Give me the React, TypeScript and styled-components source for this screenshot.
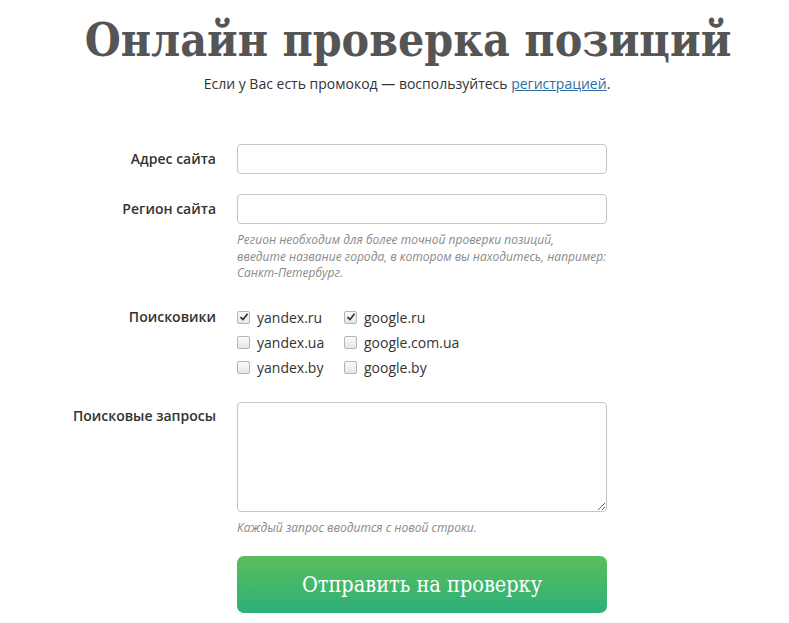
import styled, { createGlobalStyle } from "styled-components";

const GlobalStyle = createGlobalStyle`
  html, body {
    margin: 0;
    padding: 0;
    background: #fff;
  }
  body {
    font-family: "Open Sans", "Liberation Sans", sans-serif;
    color: #333;
  }
`;

interface iEngine {
  name: string;
  checked: boolean;
}

const engines: Array<iEngine> = [
  { name: "yandex.ru", checked: true },
  { name: "google.ru", checked: true },
  { name: "yandex.ua", checked: false },
  { name: "google.com.ua", checked: false },
  { name: "yandex.by", checked: false },
  { name: "google.by", checked: false },
];

const Check = ({ checked }: { checked: boolean }) => (
  <Box>
    {checked && (
      <svg width="10" height="10" viewBox="0 0 10 10">
        <path d="M1.5 5.2 L4 7.6 L8.6 1.8" fill="none" stroke="#333" strokeWidth="1.7" />
      </svg>
    )}
  </Box>
);

const App = () => {
  return (
    <>
      <GlobalStyle />
      <Page>
        <Title>Онлайн проверка позиций</Title>
        <Sub>
          Если у Вас есть промокод — воспользуйтесь <Link href="#">регистрацией</Link>.
        </Sub>
        <Form>
          <Label>Адрес сайта</Label>
          <Field>
            <Input />
          </Field>

          <Label>Регион сайта</Label>
          <Field>
            <Input />
            <Hint>
              Регион необходим для более точной проверки позиций,
              <br />
              введите название города, в котором вы находитесь, например:
              <br />
              Санкт-Петербург.
            </Hint>
          </Field>

          <Label>Поисковики</Label>
          <Field>
            <Engines>
              {engines.map((el) => (
                <Engine key={el.name}>
                  <Check checked={el.checked} />
                  {el.name}
                </Engine>
              ))}
            </Engines>
          </Field>

          <Label $pad={4}>Поисковые запросы</Label>
          <Field>
            <Area />
            <Hint>Каждый запрос вводится с новой строки.</Hint>
          </Field>

          <span />
          <Field>
            <Button>Отправить на проверку</Button>
          </Field>
        </Form>
      </Page>
    </>
  );
};
export default App;

const Page = styled.div`
  width: 789px;
  padding-top: 14px;
`;

const Title = styled.h1`
  margin: 0;
  text-align: center;
  font-family: "DejaVu Serif Condensed", "DejaVu Serif", "Liberation Serif", serif;
  font-stretch: condensed;
  font-weight: bold;
  font-size: 46px;
  line-height: 52px;
  color: #555;
  padding-left: 27px;
`;

const Sub = styled.p`
  margin: 8px 0 0;
  text-align: center;
  font-size: 14px;
  line-height: 20px;
  color: #333;
  padding-left: 25px;
`;

const Link = styled.a`
  color: #2c6ea8;
  text-decoration: underline;
`;

const Form = styled.div`
  display: grid;
  grid-template-columns: 216px 370px;
  column-gap: 21px;
  row-gap: 20px;
  margin-top: 50px;
`;

const Label = styled.div<{ $pad?: number }>`
  text-align: right;
  font-size: 14px;
  font-weight: 600;
  color: #333;
  line-height: 20px;
  padding-top: ${(p) => p.$pad ?? 5}px;
  align-self: start;
`;

const Field = styled.div`
  display: flex;
  flex-direction: column;
`;

const Input = styled.input`
  box-sizing: border-box;
  width: 370px;
  height: 30px;
  border: 1px solid #c6c6c6;
  border-radius: 4px;
  background: #fff;
  outline: none;
`;

const Area = styled.textarea`
  box-sizing: border-box;
  width: 370px;
  height: 110px;
  border: 1px solid #c6c6c6;
  border-radius: 4px;
  background: #fff;
  outline: none;
  resize: vertical;
`;

const Hint = styled.div`
  margin-top: 8px;
  font-size: 12px;
  font-style: italic;
  line-height: 16.5px;
  color: #8a8a8a;
`;

const Engines = styled.div`
  display: grid;
  grid-template-columns: 107px auto;
  grid-auto-rows: 25px;
  margin-top: 3px;
  margin-bottom: 2px;
`;

const Engine = styled.label`
  display: flex;
  align-items: center;
  gap: 7px;
  font-size: 14px;
  color: #333;
`;

const Box = styled.span`
  box-sizing: border-box;
  width: 13px;
  height: 13px;
  border: 1px solid #b5b5b5;
  border-radius: 2px;
  background: linear-gradient(#fafafa, #e6e6e6);
  display: flex;
  align-items: center;
  justify-content: center;
`;

const Button = styled.button`
  width: 370px;
  height: 57px;
  border: none;
  border-radius: 7px;
  background: linear-gradient(#5abe5b, #2cb07a);
  color: #fff;
  font-family: "DejaVu Serif Condensed", "DejaVu Serif", "Liberation Serif", serif;
  font-stretch: condensed;
  font-size: 21.5px;
  cursor: pointer;
`;
